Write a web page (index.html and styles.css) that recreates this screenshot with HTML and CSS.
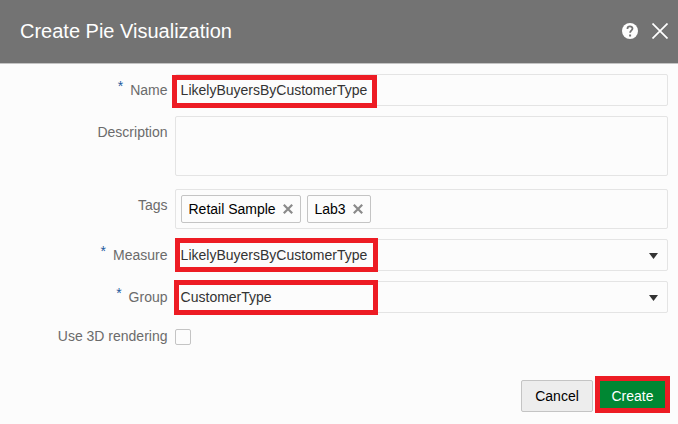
FILE: index.html
```html
<!DOCTYPE html>
<html lang="en">
<head>
<meta charset="utf-8">
<title>Create Pie Visualization</title>
<link rel="stylesheet" href="styles.css">
</head>
<body>
<div class="dialog">
  <header class="header">
    <h1 class="title">Create Pie Visualization</h1>
    <svg class="help" width="16" height="16" viewBox="0 0 16 16"><circle cx="8" cy="8" r="8" fill="#fff"/><path d="M5.5 6V5.6a2.5 2.2 0 0 1 5 0c0 1.7-2.4 1.8-2.4 4.2" fill="none" stroke="#737373" stroke-width="1.8"/><rect x="7.1" y="11.5" width="2" height="2" fill="#737373"/></svg>
    <svg class="close" width="16" height="16" viewBox="0 0 16 16"><path d="M.5.5l15 15M15.5.5l-15 15" fill="none" stroke="#fff" stroke-width="1.7"/></svg>
  </header>
  <form class="form">
    <div class="row">
      <label class="label"><span class="req">*</span>Name</label>
      <div class="field">LikelyBuyersByCustomerType<span class="mark mark-name"></span></div>
    </div>
    <div class="row row-description">
      <label class="label">Description</label>
      <div class="field"></div>
    </div>
    <div class="row row-tags">
      <label class="label">Tags</label>
      <div class="field">
        <span class="tag">Retail Sample<svg width="10" height="10" viewBox="0 0 10 10"><path d="M.8.8l8.4 8.4M9.2.8L.8 9.2"/></svg></span>
        <span class="tag">Lab3<svg width="10" height="10" viewBox="0 0 10 10"><path d="M.8.8l8.4 8.4M9.2.8L.8 9.2"/></svg></span>
      </div>
    </div>
    <div class="row">
      <label class="label"><span class="req">*</span>Measure</label>
      <div class="field">LikelyBuyersByCustomerType<svg class="arrow" width="9" height="6" viewBox="0 0 9 6"><path d="M0 0h9L4.5 6z"/></svg><span class="mark mark-measure"></span></div>
    </div>
    <div class="row">
      <label class="label"><span class="req">*</span>Group</label>
      <div class="field">CustomerType<svg class="arrow" width="9" height="6" viewBox="0 0 9 6"><path d="M0 0h9L4.5 6z"/></svg><span class="mark mark-group"></span></div>
    </div>
    <div class="row row-check">
      <label class="label">Use 3D rendering</label>
      <span class="checkbox"></span>
    </div>
  </form>
  <footer class="footer">
    <button class="btn cancel">Cancel</button>
    <button class="btn create">Create</button>
  </footer>
</div>
</body>
</html>
```

FILE: styles.css
```css
* { box-sizing: border-box; }
body {
  margin: 0;
  background: #fcfcfc;
  font: 14px/16px "Liberation Sans", Arial, sans-serif;
  color: #333;
}
.dialog { height: 424px; overflow: hidden; }
.header {
  display: flex;
  align-items: center;
  height: 64px;
  padding: 0 10px 1px 20px;
  background: #737373;
  border-bottom: 1px solid #c4c4c4;
}
.title { flex: 1; margin: 0; font-size: 20px; font-weight: 400; line-height: 24px; color: #fff; }
.close { margin-left: 14px; }
.form { display: flex; flex-direction: column; gap: 10px; padding: 10px 10px 0 0; }
.row { display: flex; height: 32px; }
.label { width: 175px; padding: 8px 7.5px 0 0; text-align: right; color: #6b6b6b; }
.req { margin-right: 7px; position: relative; top: -4px; color: #1f5a9c; }
.field {
  position: relative;
  flex: 1;
  display: flex;
  align-items: center;
  padding: 0 9px 0 4.6px;
  border: 1px solid #e4e4e4;
  border-radius: 2px;
}
.row-description { height: 60px; }
.row-tags { height: 40px; margin-top: 3px; }
.row-tags .field { gap: 6px; padding-left: 5px; }
.tag {
  display: flex;
  align-items: center;
  justify-content: space-between;
  width: 120px;
  height: 28px;
  padding: 0 7px 0 6.5px;
  color: #000;
  border: 1px solid #c4c4c4;
  border-radius: 2px;
}
.tag + .tag { width: 64px; }
.tag path { fill: none; stroke: #8a8a8a; stroke-width: 2.2; }
.arrow { margin-left: auto; fill: #333; position: relative; top: 1px; }
.row-check { height: 16px; margin-top: 6px; }
.row-check .label { padding-top: 0; margin-top: -1px; }
.checkbox { width: 16px; height: 16px; border: 1px solid #c4c4c4; border-radius: 2px; }
.mark { position: absolute; border: 5px solid #ed1c24; }
.mark-name { left: -4px; top: 0; width: 205px; height: 33px; }
.mark-measure { left: -1px; top: -2px; width: 203px; height: 34px; }
.mark-group { left: -2px; top: -2px; width: 204px; height: 35px; }
.footer { display: flex; align-items: flex-start; justify-content: flex-end; gap: 2px; margin-top: 31px; padding-right: 8px; }
.btn { font: inherit; padding: 0; }
.cancel { width: 72px; height: 32px; margin-top: 4px; color: #000; background: #ededed; border: 1px solid #c4c4c4; border-radius: 2px; }
.create { width: 75px; height: 37px; padding-top: 3px; color: #fff; background: #008733; border: 5px solid #ed1c24; }
```
